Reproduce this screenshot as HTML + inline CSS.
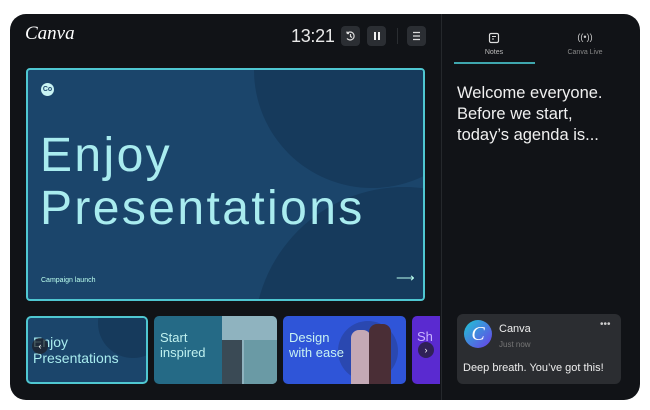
<!DOCTYPE html>
<html><head><meta charset="utf-8"><style>
*{margin:0;padding:0;box-sizing:border-box}
html,body{width:650px;height:410px;overflow:hidden}
body{background:#fff;position:relative;font-family:"Liberation Sans",sans-serif}
.frame{position:absolute;left:10px;top:14px;width:630px;height:386px;background:#111317;border-radius:16px;overflow:hidden}
.abs{position:absolute}
.btn{position:absolute;top:12px;width:19px;height:20px;background:#2b2e33;border-radius:4px}
.slide{position:absolute;left:16px;top:54px;width:399px;height:233px;background:#1b456b;border:2px solid #4fc7d1;border-radius:4px;overflow:hidden}
.th{position:absolute;top:302px;height:68px;border-radius:5px;overflow:hidden}
</style></head><body>
<div class="frame">
 <div class="abs" style="left:15px;top:9px;color:#fff;font-family:'Liberation Serif',serif;font-style:italic;font-size:19px">Canva</div>
 <div class="abs" style="left:281px;top:12px;color:#e8e8e8;font-size:18px;letter-spacing:-0.3px">13:21</div>
 <div class="btn" style="left:331px"><svg width="19" height="20" viewBox="0 0 19 20"><path d="M6 7.5a4 4 0 1 1 0 5M6 7.5v-2M6 7.5h2M9.5 8v2.5l1.5 1" stroke="#ddd" stroke-width="1.2" fill="none"/></svg></div>
 <div class="btn" style="left:357px"><div class="abs" style="left:7px;top:6px;width:2px;height:8px;background:#eee"></div><div class="abs" style="left:11px;top:6px;width:2px;height:8px;background:#eee"></div></div>
 <div class="abs" style="left:387px;top:14px;width:1px;height:16px;background:#2a2d31"></div>
 <div class="btn" style="left:397px"><svg width="19" height="20" viewBox="0 0 19 20"><path d="M6 6.5h7M6 10h7M6 13.5h7" stroke="#ddd" stroke-width="1.2"/></svg></div>
 <div class="slide">
  <div class="abs" style="left:226px;top:-118px;width:236px;height:236px;border-radius:50%;background:#163a5c"></div>
  <div class="abs" style="left:226px;top:117px;width:300px;height:300px;border-radius:50%;background:#163a5c"></div>
  <div class="abs" style="left:13px;top:13px;width:13px;height:13px;border-radius:50%;background:#c9f3f3;color:#1b456b;font-size:7px;font-weight:bold;text-align:center;line-height:13px">Co</div>
  <div class="abs" style="left:12px;top:59px;color:#a9ecef;font-size:48px;line-height:53px;letter-spacing:2.4px">Enjoy<br>Presentations</div>
  <div class="abs" style="left:13px;top:207px;color:#bfe;font-size:7px">Campaign launch</div>
  <div class="abs" style="left:368px;top:200px;color:#bfe;font-size:13px">⟶</div>
 </div>
 <div class="th" style="left:16px;width:122px;background:#1b456b;border:2px solid #4fc7d1">
  <div class="abs" style="left:70px;top:-30px;width:70px;height:70px;border-radius:50%;background:#163a5c"></div>
  <div class="abs" style="left:5px;top:16px;color:#a9ecef;font-size:14px;line-height:16px">Enjoy<br>Presentations</div>
  <div class="abs" style="left:4px;top:20px;width:16px;height:16px;border-radius:50%;background:rgba(30,30,35,.7);color:#fff;font-size:9px;text-align:center;line-height:16px">‹</div>
 </div>
 <div class="th" style="left:144px;width:123px;background:#256a86">
  <div class="abs" style="left:68px;top:0;width:55px;height:68px;background:#8fb3bf"></div>
  <div class="abs" style="left:68px;top:24px;width:20px;height:44px;background:#3a4a55"></div>
  <div class="abs" style="left:90px;top:24px;width:33px;height:44px;background:#6a9aa5"></div>
  <div class="abs" style="left:6px;top:14px;color:#bff0ef;font-size:13px;line-height:15px">Start<br>inspired</div>
 </div>
 <div class="th" style="left:273px;width:123px;background:#2f55d8">
  <div class="abs" style="left:55px;top:5px;width:60px;height:60px;border-radius:50%;background:#2a48b0"></div>
  <div class="abs" style="left:68px;top:14px;width:20px;height:54px;background:#c4a9b5;border-radius:8px 8px 0 0"></div>
  <div class="abs" style="left:86px;top:8px;width:22px;height:60px;background:#4a2e36;border-radius:8px 8px 0 0"></div>
  <div class="abs" style="left:6px;top:14px;color:#c8f2f2;font-size:13px;line-height:15px">Design<br>with ease</div>
 </div>
 <div class="th" style="left:402px;width:28px;background:#5a2ad0;border-radius:5px 0 0 5px">
  <div class="abs" style="left:5px;top:13px;color:#c9b5ff;font-size:13px">Sh</div>
  <div class="abs" style="left:6px;top:26px;width:16px;height:16px;border-radius:50%;background:rgba(30,30,35,.7);color:#fff;font-size:9px;text-align:center;line-height:16px">›</div>
 </div>
 <div class="abs" style="left:431px;top:0;width:1px;height:386px;background:#25282c"></div>
 <div class="abs" style="left:444px;top:18px;width:80px;text-align:center;color:#bbb;font-size:7px"><svg width="12" height="12" viewBox="0 0 12 12" style="display:block;margin:0 auto 5px"><rect x="1.5" y="1.5" width="9" height="9" rx="1.5" stroke="#ddd" stroke-width="1.2" fill="none"/><path d="M4 4.5h4M4 7h2" stroke="#ddd"/></svg>Notes</div>
 <div class="abs" style="left:444px;top:48px;width:81px;height:2px;background:#3fa7ae"></div>
 <div class="abs" style="left:535px;top:18px;width:80px;text-align:center;color:#888;font-size:7px"><div style="color:#ccc;font-size:9px;height:17px">((•))</div>Canva Live</div>
 <div class="abs" style="left:447px;top:69px;color:#f0f0f0;font-size:16.5px;line-height:21px">Welcome everyone.<br>Before we start,<br>today’s agenda is...</div>
 <div class="abs" style="left:447px;top:300px;width:164px;height:70px;background:#2b2d31;border-radius:6px">
  <div class="abs" style="left:7px;top:6px;width:28px;height:28px;border-radius:50%;background:linear-gradient(135deg,#1fc7d4,#6a3de8);color:#fff;font-family:'Liberation Serif',serif;font-style:italic;font-size:20px;text-align:center;line-height:28px">C</div>
  <div class="abs" style="left:42px;top:9px;color:#eee;font-size:11px">Canva</div>
  <div class="abs" style="left:42px;top:26px;color:#777;font-size:8px">Just now</div>
  <div class="abs" style="left:143px;top:5px;color:#ccc;font-size:10px">•••</div>
  <div class="abs" style="left:6px;top:48px;color:#eee;font-size:11px">Deep breath. You’ve got this!</div>
 </div>
</div>
</body></html>
